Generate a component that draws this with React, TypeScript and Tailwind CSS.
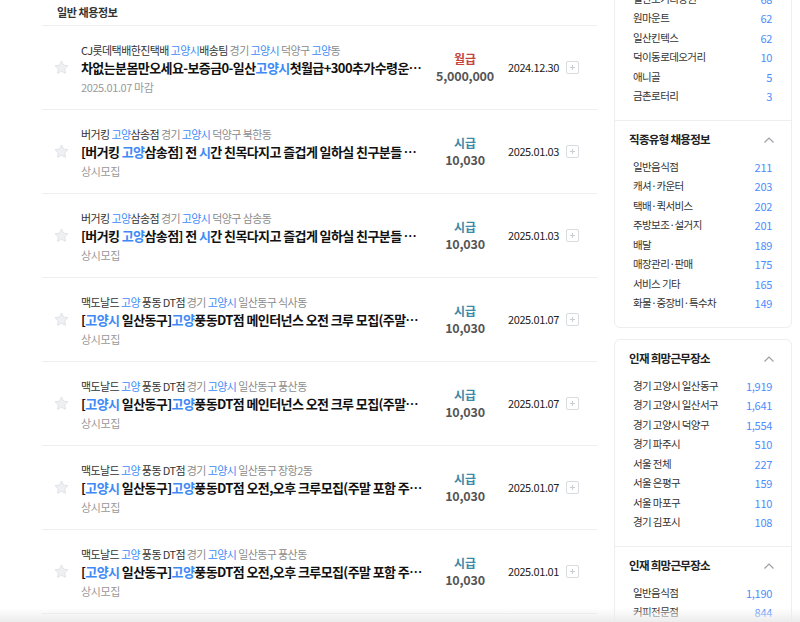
import type { ReactNode } from 'react';

type Job = {
  company: ReactNode;
  location: ReactNode;
  title: ReactNode;
  sub: string;
  payType: '월급' | '시급';
  pay: string;
  date: string;
};

const B = ({ children }: { children: ReactNode }) => (
  <span className="text-[#3d8af7]">{children}</span>
);

const jobs: Job[] = [
  {
    company: <>CJ롯데택배한진택배 <B>고양시</B>배송팀</>,
    location: <>경기 <B>고양시</B> 덕양구 <B>고양</B>동</>,
    title: <>차없는분몸만오세요-보증금0-일산<B>고양시</B>첫월급+300추가수령운전배송기사모집</>,
    sub: '2025.01.07 마감',
    payType: '월급',
    pay: '5,000,000',
    date: '2024.12.30',
  },
  {
    company: <>버거킹 <B>고양</B>삼송점</>,
    location: <>경기 <B>고양시</B> 덕양구 북한동</>,
    title: <>[버거킹 <B>고양</B>삼송점] 전 <B>시</B>간 친목다지고 즐겁게 일하실 친구분들 모집중</>,
    sub: '상시모집',
    payType: '시급',
    pay: '10,030',
    date: '2025.01.03',
  },
  {
    company: <>버거킹 <B>고양</B>삼송점</>,
    location: <>경기 <B>고양시</B> 덕양구 삼송동</>,
    title: <>[버거킹 <B>고양</B>삼송점] 전 <B>시</B>간 친목다지고 즐겁게 일하실 친구분들 모집중</>,
    sub: '상시모집',
    payType: '시급',
    pay: '10,030',
    date: '2025.01.03',
  },
  {
    company: <>맥도날드 <B>고양</B> 풍동 DT점</>,
    location: <>경기 <B>고양시</B> 일산동구 식사동</>,
    title: <>[<B>고양시</B> 일산동구]<B>고양</B>풍동DT점 메인터넌스 오전 크루 모집(주말포함 주 4-5회)</>,
    sub: '상시모집',
    payType: '시급',
    pay: '10,030',
    date: '2025.01.07',
  },
  {
    company: <>맥도날드 <B>고양</B> 풍동 DT점</>,
    location: <>경기 <B>고양시</B> 일산동구 풍산동</>,
    title: <>[<B>고양시</B> 일산동구]<B>고양</B>풍동DT점 메인터넌스 오전 크루 모집(주말포함 주 4-5회)</>,
    sub: '상시모집',
    payType: '시급',
    pay: '10,030',
    date: '2025.01.07',
  },
  {
    company: <>맥도날드 <B>고양</B> 풍동 DT점</>,
    location: <>경기 <B>고양시</B> 일산동구 장항2동</>,
    title: <>[<B>고양시</B> 일산동구]<B>고양</B>풍동DT점 오전,오후 크루모집(주말 포함 주 4-5회)</>,
    sub: '상시모집',
    payType: '시급',
    pay: '10,030',
    date: '2025.01.07',
  },
  {
    company: <>맥도날드 <B>고양</B> 풍동 DT점</>,
    location: <>경기 <B>고양시</B> 일산동구 풍산동</>,
    title: <>[<B>고양시</B> 일산동구]<B>고양</B>풍동DT점 오전,오후 크루모집(주말 포함 주 4-5회)</>,
    sub: '상시모집',
    payType: '시급',
    pay: '10,030',
    date: '2025.01.01',
  },
];

type Section = { title?: string; items: [string, string][] };

const cards: Section[][] = [
  [
    {
      items: [
        ['일산오거리상권', '68'],
        ['원마운트', '62'],
        ['일산킨텍스', '62'],
        ['덕이동로데오거리', '10'],
        ['애니골', '5'],
        ['금촌로터리', '3'],
      ],
    },
    {
      title: '직종유형 채용정보',
      items: [
        ['일반음식점', '211'],
        ['캐셔·카운터', '203'],
        ['택배·퀵서비스', '202'],
        ['주방보조·설거지', '201'],
        ['배달', '189'],
        ['매장관리·판매', '175'],
        ['서비스 기타', '165'],
        ['화물·중장비·특수차', '149'],
      ],
    },
  ],
  [
    {
      title: '인재 희망근무장소',
      items: [
        ['경기 고양시 일산동구', '1,919'],
        ['경기 고양시 일산서구', '1,641'],
        ['경기 고양시 덕양구', '1,554'],
        ['경기 파주시', '510'],
        ['서울 전체', '227'],
        ['서울 은평구', '159'],
        ['서울 마포구', '110'],
        ['경기 김포시', '108'],
      ],
    },
    {
      title: '인재 희망근무장소',
      items: [
        ['일반음식점', '1,190'],
        ['커피전문점', '844'],
        ['호프·일반주점', '612'],
      ],
    },
  ],
];

function Star() {
  return (
    <svg width="17" height="17" viewBox="0 0 24 24" className="shrink-0">
      <path
        d="M12 2.8l2.8 5.9 6.4.8-4.7 4.4 1.2 6.4L12 17.2l-5.7 3.1 1.2-6.4-4.7-4.4 6.4-.8z"
        fill="#eef0f3"
        stroke="#dcdfe4"
        strokeWidth="1.2"
        strokeLinejoin="round"
      />
    </svg>
  );
}

function PlusBox() {
  return (
    <div className="w-[13px] h-[13px] border border-[#d8dbe0] rounded-[2px] flex items-center justify-center">
      <svg width="7" height="7" viewBox="0 0 7 7">
        <path d="M3.5 1v5M1 3.5h5" stroke="#c9ccd2" strokeWidth="1" />
      </svg>
    </div>
  );
}

function Chevron() {
  return (
    <svg width="12" height="8" viewBox="0 0 12 8">
      <path d="M1.5 6.5L6 2l4.5 4.5" fill="none" stroke="#9ca0a6" strokeWidth="1.2" />
    </svg>
  );
}

function JobRow({ job }: { job: Job }) {
  return (
    <div className="h-[84px] border-b border-[#eeeeee] flex items-center pl-[11px]">
      <Star />
      <div className="ml-[11px] w-[342px] pt-[2px]">
        <div className="text-[11px] leading-[18px] tracking-[-0.6px] text-[#333] whitespace-nowrap">
          {job.company} <span className="text-[#8c8c8c]">{job.location}</span>
        </div>
        <div className="text-[13px] leading-[18px] tracking-[-0.6px] font-bold text-[#111] truncate">
          {job.title}
        </div>
        <div className="text-[11px] leading-[20px] tracking-[-0.4px] text-[#999]">{job.sub}</div>
      </div>
      <div className="w-[84px] flex flex-col items-center">
        <div
          className={
            job.payType === '월급'
              ? 'text-[12px] leading-[16px] font-bold text-[#c4453f]'
              : 'text-[12px] leading-[16px] font-bold text-[#3a8aa8]'
          }
        >
          {job.payType}
        </div>
        <div className="text-[12.5px] leading-[18px] font-bold text-[#555] tracking-[-0.2px]">{job.pay}</div>
      </div>
      <div className="ml-[1px] w-[52px] text-[11px] tracking-[-0.4px] text-[#222] whitespace-nowrap">
        {job.date}
      </div>
      <div className="ml-[6px]">
        <PlusBox />
      </div>
    </div>
  );
}

function SideSection({ section, first }: { section: Section; first: boolean }) {
  return (
    <div className={first ? 'pt-[10px] pb-[14px]' : 'pt-[10px] pb-[14px] border-t border-[#eeeeee]'}>
      {section.title && (
        <div className="h-[18px] flex items-center justify-between pl-[14px] pr-[16px] mb-[8px]">
          <span className="text-[11.5px] tracking-[-0.7px] font-bold text-[#222]">{section.title}</span>
          <Chevron />
        </div>
      )}
      <div className="pl-[18px] pr-[19px]">
        {section.items.map(([name, count], i) => (
          <div key={i} className="h-[19.5px] flex items-center justify-between text-[10.5px]">
            <span className="text-[#333] tracking-[-0.6px]">{name}</span>
            <span className="text-[#4c8dff] text-[11px] tracking-[-0.3px]">{count}</span>
          </div>
        ))}
      </div>
    </div>
  );
}

export default function App() {
  return (
    <div
      className="relative w-[800px] h-[622px] overflow-hidden bg-white"
      style={{ fontFamily: '"Noto Sans CJK KR", "Noto Sans", sans-serif' }}
    >
      <div className="flex pl-[42px]">
        <div className="w-[555px] shrink-0">
          <div className="h-[26px] border-b border-[#eeeeee] pl-[15px] flex items-center">
            <span className="text-[11px] tracking-[-0.4px] font-bold text-[#333]">일반 채용정보</span>
          </div>
          {jobs.map((job, i) => (
            <JobRow key={i} job={job} />
          ))}
        </div>
        <div className="ml-[17px] w-[178px] shrink-0 flex flex-col gap-[11px] -mt-[22px]">
          {cards.map((card, ci) => (
            <div key={ci} className="border border-[#eeeeee] rounded-[6px]">
              {card.map((s, si) => (
                <SideSection key={si} section={s} first={si === 0} />
              ))}
            </div>
          ))}
        </div>
      </div>
      <div className="absolute left-0 right-0 bottom-0 h-[14px] bg-linear-to-b from-transparent to-[#ececec]" />
    </div>
  );
}
